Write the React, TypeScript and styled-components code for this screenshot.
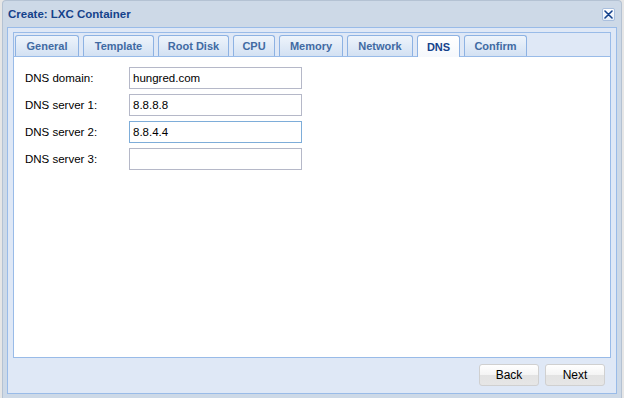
import React, { useState } from 'react';
import styled, { createGlobalStyle } from 'styled-components';

const GlobalStyle = createGlobalStyle`
  html, body {
    margin: 0;
    padding: 0;
    background: #e6e6e6;
  }
  body {
    font-family: "Liberation Sans", Arial, sans-serif;
  }
`;

const tabs = [
  { name: 'General', width: 64 },
  { name: 'Template', width: 71 },
  { name: 'Root Disk', width: 71 },
  { name: 'CPU', width: 42 },
  { name: 'Memory', width: 64 },
  { name: 'Network', width: 66 },
  { name: 'DNS', width: 43 },
  { name: 'Confirm', width: 63 },
];

const fields = [
  { label: 'DNS domain:', value: 'hungred.com' },
  { label: 'DNS server 1:', value: '8.8.8.8' },
  { label: 'DNS server 2:', value: '8.8.4.4', focused: true },
  { label: 'DNS server 3:', value: '' },
];

const App = () => {
  const [active, setActive] = useState('DNS');

  return (
    <Page>
      <GlobalStyle />
      <Window>
        <Header>
          <Title>Create: LXC Container</Title>
          <CloseButton aria-label="close">
            <svg width="9" height="9" viewBox="0 0 9 9">
              <path d="M1 1 L8 8 M8 1 L1 8" stroke="#15428b" strokeWidth="1.6" strokeLinecap="round" />
            </svg>
          </CloseButton>
        </Header>
        <Frame>
          <TabPanel>
            <TabBar>
              {tabs.map((t) => (
                <Tab
                  key={t.name}
                  $width={t.width}
                  $active={t.name === active}
                  onClick={() => setActive(t.name)}
                >
                  {t.name}
                </Tab>
              ))}
            </TabBar>
            <TabBody>
              {fields.map((f) => (
                <FieldRow key={f.label}>
                  <Label>{f.label}</Label>
                  <Input defaultValue={f.value} $focused={!!f.focused} />
                </FieldRow>
              ))}
            </TabBody>
          </TabPanel>
          <Footer>
            <Button>Back</Button>
            <Button>Next</Button>
          </Footer>
        </Frame>
      </Window>
    </Page>
  );
};

export default App;

const Page = styled.div`
  width: 624px;
  height: 398px;
  padding: 0 2px;
  box-sizing: border-box;
  overflow: hidden;
`;

const Window = styled.div`
  height: 398px;
  display: flex;
  flex-direction: column;
  background: #cdd9e7;
  border: 1px solid #b4c2d3;
  border-bottom: none;
  border-radius: 4px 4px 0 0;
  box-sizing: border-box;
  padding: 0 4px 4px;
`;

const Header = styled.div`
  height: 26px;
  display: flex;
  align-items: center;
  justify-content: space-between;
  padding: 0 2px 0 1px;
`;

const Title = styled.span`
  font-size: 11.5px;
  font-weight: bold;
  color: #15428b;
`;

const CloseButton = styled.div`
  width: 13px;
  height: 13px;
  box-sizing: border-box;
  border: 1px solid #a9bfde;
  border-radius: 2px;
  background: linear-gradient(#ffffff, #e6eef9);
  display: flex;
  align-items: center;
  justify-content: center;
`;

const Frame = styled.div`
  flex: 1;
  display: flex;
  flex-direction: column;
  background: #dfe8f6;
  border: 1px solid #99bbe8;
  padding: 4px 5px 7px;
`;

const TabPanel = styled.div`
  flex: 1;
  display: flex;
  flex-direction: column;
`;

const TabBar = styled.div`
  display: flex;
  align-items: flex-end;
  gap: 4px;
  height: 23px;
  padding: 0 1px;
  border: 1px solid #99bbe8;
  border-bottom: none;
  background: #dfe8f6;
`;

const Tab = styled.div<{ $active: boolean; $width: number }>`
  width: ${(p) => p.$width}px;
  height: ${(p) => (p.$active ? '22px' : '21px')};
  margin-bottom: ${(p) => (p.$active ? '-1px' : '0')};
  display: flex;
  align-items: center;
  justify-content: center;
  box-sizing: border-box;
  border: 1px solid #8db2e3;
  border-bottom: none;
  border-radius: 3px 3px 0 0;
  font-size: 11px;
  font-weight: bold;
  color: ${(p) => (p.$active ? '#15428b' : '#416aa3')};
  background: ${(p) =>
    p.$active ? 'linear-gradient(#ffffff, #f5f8fc)' : 'linear-gradient(#eef4fb, #d3e1f3)'};
  position: relative;
  z-index: ${(p) => (p.$active ? 1 : 0)};
  cursor: pointer;
`;

const TabBody = styled.div`
  flex: 1;
  background: #ffffff;
  border: 1px solid #99bbe8;
  padding: 10px 11px;
  display: flex;
  flex-direction: column;
  gap: 5px;
`;

const FieldRow = styled.div`
  display: flex;
  align-items: center;
  height: 22px;
`;

const Label = styled.label`
  width: 104px;
  font-size: 11.5px;
  color: #000;
`;

const Input = styled.input<{ $focused: boolean }>`
  width: 173px;
  height: 22px;
  box-sizing: border-box;
  border: 1px solid ${(p) => (p.$focused ? '#7eadd9' : '#b5b8c8')};
  padding: 0 3px;
  font-family: "Liberation Sans", Arial, sans-serif;
  font-size: 11.5px;
  color: #000;
  outline: none;
`;

const Footer = styled.div`
  display: flex;
  justify-content: flex-end;
  gap: 6px;
  padding: 6px 6px 0;
`;

const Button = styled.button`
  width: 60px;
  height: 22px;
  border: 1px solid #d0d0d0;
  border-radius: 3px;
  background: linear-gradient(#ffffff 0%, #f4f4f4 50%, #e3e3e3 51%, #e6e6e6 100%);
  font-family: "Liberation Sans", Arial, sans-serif;
  font-size: 12px;
  color: #000;
  padding: 0;
`;
